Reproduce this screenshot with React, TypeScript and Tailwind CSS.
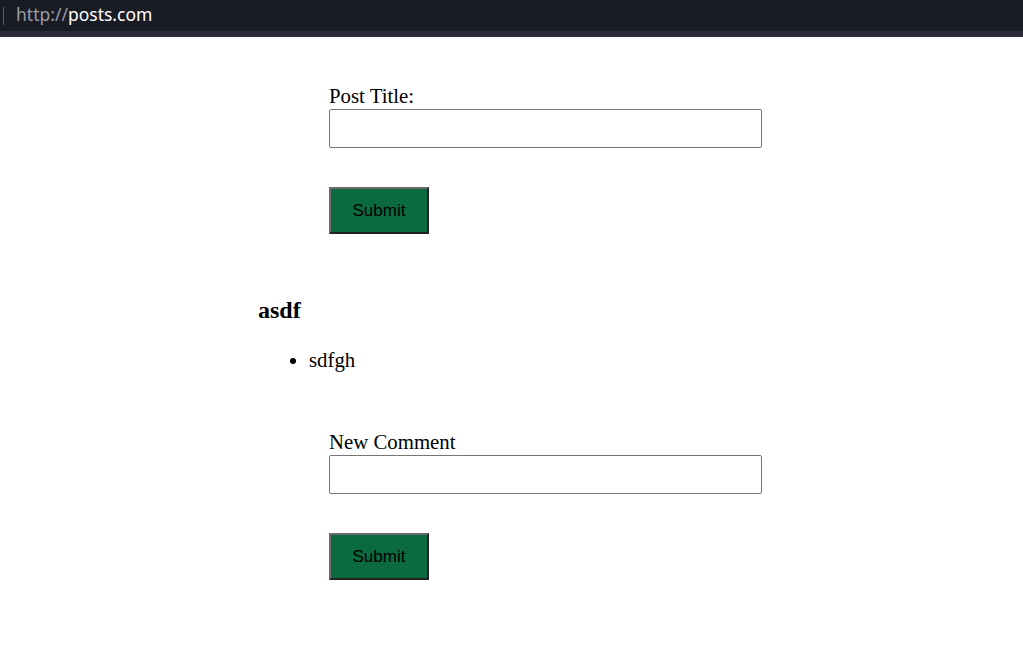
import React, { useState } from 'react';

const serif = { fontFamily: '"Liberation Serif", "Times New Roman", serif' };

export default function App() {
  const [title, setTitle] = useState('');
  const [comment, setComment] = useState('');

  return (
    <div className="min-h-screen bg-white text-black font-['Liberation_Serif',serif]">
      {/* Address bar */}
      <div className="h-[31px] bg-[#1a1c25] flex items-center">
        <div className="w-px h-[18px] bg-[#5a5d68] ml-[3px] mr-[12px]" />
        <span className="text-[17.5px] leading-none font-['Noto_Sans',sans-serif] -mt-[2px]">
          <span className="text-[#9a9ca4]">http://</span>
          <span className="text-white">posts.com</span>
        </span>
      </div>
      <div className="h-[6px] bg-[#2b2d3a]" />

      <div className="pl-[258px] pt-[48px] text-[20.8px]" style={serif}>
        {/* Post form */}
        <form className="ml-[71px] flex flex-col items-start" onSubmit={e => e.preventDefault()}>
          <label className="leading-[21px]">Post Title:</label>
          <input
            value={title}
            onChange={e => setTitle(e.target.value)}
            className="mt-[3px] w-[433px] h-[39px] border border-[#767676] rounded-[2px] px-2 outline-none"
          />
          <button className="mt-[39px] w-[100px] h-[47px] bg-[#0b6a40] border-2 border-t-[#6b6b6b] border-l-[#6b6b6b] border-r-[#222] border-b-[#222] text-[17px] font-['Liberation_Sans',sans-serif] text-black">
            Submit
          </button>
        </form>

        {/* Post */}
        <h2 className="mt-[63px] text-[24px] font-bold leading-[27px]">asdf</h2>
        <ul className="mt-[24px] list-disc pl-[51px] leading-[23px]">
          <li>sdfgh</li>
        </ul>

        {/* Comment form */}
        <form className="mt-[60px] ml-[71px] flex flex-col items-start" onSubmit={e => e.preventDefault()}>
          <label className="leading-[21px]">New Comment</label>
          <input
            value={comment}
            onChange={e => setComment(e.target.value)}
            className="mt-[3px] w-[433px] h-[39px] border border-[#767676] rounded-[2px] px-2 outline-none"
          />
          <button className="mt-[39px] w-[100px] h-[47px] bg-[#0b6a40] border-2 border-t-[#6b6b6b] border-l-[#6b6b6b] border-r-[#222] border-b-[#222] text-[17px] font-['Liberation_Sans',sans-serif] text-black">
            Submit
          </button>
        </form>
      </div>
    </div>
  );
}
